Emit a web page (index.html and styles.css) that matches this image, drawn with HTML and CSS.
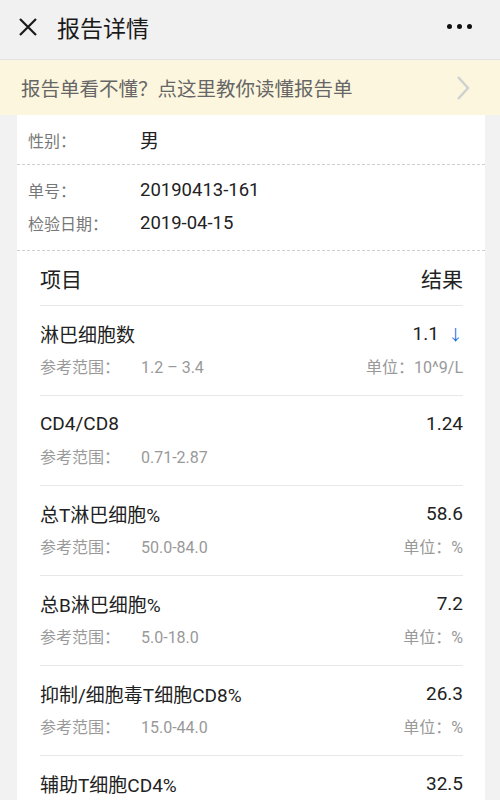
FILE: index.html
```html
<!DOCTYPE html>
<html lang="zh-CN">
<head>
  <meta charset="UTF-8" />
  <title>报告详情</title>
  <link rel="stylesheet" href="styles.css">
</head>
<body>
  <div class="topbar">
    <svg class="close" width="20" height="20" viewBox="0 0 20 20">
      <path d="M2 2 L18 18 M18 2 L2 18" stroke="#1a1a1a" stroke-width="2.2" fill="none" />
    </svg>
    <span class="title">报告详情</span>
    <span class="more"><i></i><i></i><i></i></span>
  </div>

  <div class="tip">
    <span>报告单看不懂？点这里教你读懂报告单</span>
    <svg width="14" height="26" viewBox="0 0 14 26">
      <path d="M2 2 L12 13 L2 24" stroke="#cfcfcf" stroke-width="2.4" fill="none" />
    </svg>
  </div>

  <div class="card">
    <div class="info">
      <div class="info-row"><span class="label">性别：</span><span class="value big">男</span></div>
    </div>
    <div class="info second">
      <div class="info-row"><span class="label">单号：</span><span class="value">20190413-161</span></div>
      <div class="info-row"><span class="label">检验日期：</span><span class="value">2019-04-15</span></div>
    </div>

    <div class="table">
      <div class="thead"><span>项目</span><span>结果</span></div>

      <div class="item">
        <div class="line"><span>淋巴细胞数</span><span>1.1<b class="down">↓</b></span></div>
        <div class="ref"><span><em>参考范围：</em>1.2 – 3.4</span><span>单位：10^9/L</span></div>
      </div>
      <div class="item">
        <div class="line"><span>CD4/CD8</span><span>1.24</span></div>
        <div class="ref"><span><em>参考范围：</em>0.71-2.87</span><span></span></div>
      </div>
      <div class="item">
        <div class="line"><span>总T淋巴细胞%</span><span>58.6</span></div>
        <div class="ref"><span><em>参考范围：</em>50.0-84.0</span><span>单位：%</span></div>
      </div>
      <div class="item">
        <div class="line"><span>总B淋巴细胞%</span><span>7.2</span></div>
        <div class="ref"><span><em>参考范围：</em>5.0-18.0</span><span>单位：%</span></div>
      </div>
      <div class="item">
        <div class="line"><span>抑制/细胞毒T细胞CD8%</span><span>26.3</span></div>
        <div class="ref"><span><em>参考范围：</em>15.0-44.0</span><span>单位：%</span></div>
      </div>
      <div class="item">
        <div class="line"><span>辅助T细胞CD4%</span><span>32.5</span></div>
        <div class="ref"><span><em>参考范围：</em>27.0-51.0</span><span>单位：%</span></div>
      </div>
    </div>
  </div>
</body>
</html>
```

FILE: styles.css
```css
body {
  margin: 0;
  background: #f2f2f2;
  font-family: Roboto, "Noto Sans CJK SC", sans-serif;
  color: #222;
}
.topbar {
  display: flex;
  align-items: center;
  height: 60px;
  box-sizing: border-box;
  padding: 0 18px 6px 18px;
  background: #f1f1f1;
  border-bottom: 1px solid #e2e2e2;
}
.title {
  margin-left: 19px;
  font-size: 23px;
  color: #1a1a1a;
}
.more {
  margin-left: auto;
  display: flex;
  gap: 5px;
  margin-right: 10px;
}
.more i {
  width: 5px;
  height: 5px;
  border-radius: 50%;
  background: #111;
}
.tip {
  display: flex;
  align-items: center;
  justify-content: space-between;
  height: 55px;
  padding: 0 30px 0 21px;
  background: #fdf6de;
  font-size: 19.5px;
  color: #666;
}
.card {
  margin: 0 15px 0 17px;
  background: #fff;
}
.info {
  padding: 8px 0 8px 11px;
  border-bottom: 1px dashed #cfcfcf;
}
.info-row {
  display: flex;
  align-items: center;
  height: 33px;
}
.second {
  padding: 8px 0 11px 11px;
}
.label {
  width: 112px;
  font-size: 16px;
  color: #777;
}
.value {
  font-size: 18.5px;
  color: #222;
}
.value.big {
  font-size: 19px;
}
.table {
  padding: 0 22px 0 23px;
}
.thead {
  display: flex;
  justify-content: space-between;
  align-items: center;
  height: 54px;
  font-size: 21px;
  color: #222;
  border-bottom: 1px solid #e8e8e8;
}
.item {
  height: 90px;
  border-bottom: 1px solid #e8e8e8;
  padding-top: 14px;
  box-sizing: border-box;
}
.line {
  display: flex;
  justify-content: space-between;
  align-items: center;
  height: 26px;
  font-size: 19px;
}
.down {
  font-weight: normal;
  color: #1f6fe0;
  font-size: 15px;
  margin-left: 9px;
}
.ref {
  display: flex;
  justify-content: space-between;
  align-items: center;
  height: 22px;
  margin-top: 9px;
  font-size: 16px;
  color: #999;
}
.ref em {
  font-style: normal;
  display: inline-block;
  width: 101px;
}
```
